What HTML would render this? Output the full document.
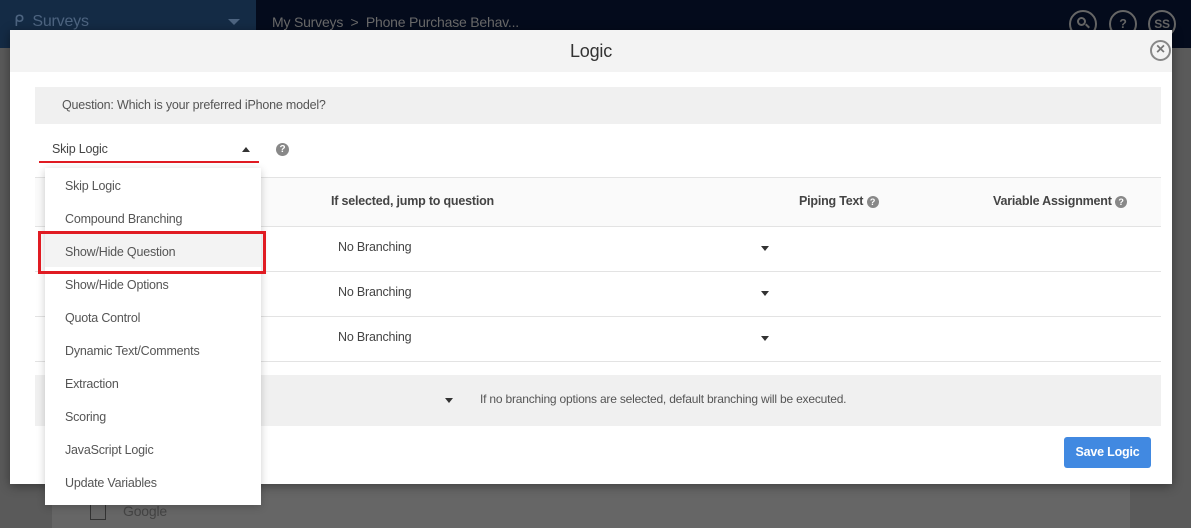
<!DOCTYPE html>
<html><head><meta charset="utf-8"><style>
*{box-sizing:border-box;margin:0;padding:0}
body{width:1191px;height:528px;overflow:hidden;position:relative;background:#5a5a5a;font-family:"Liberation Sans",sans-serif;font-size:12.5px;letter-spacing:-0.2px;color:#555}
.a{position:absolute}
</style></head><body>
<div class="a" style="left:0;top:0;width:256px;height:48px;background:#142b45"></div>
<div class="a" style="left:256px;top:0;width:935px;height:48px;background:#040b1c"></div>
<div class="a" style="left:14px;top:11px;color:#4d6480;font-size:16px">ᑭ&nbsp; Surveys</div>
<div class="a" style="left:228px;top:19px;width:0;height:0;border-left:6px solid transparent;border-right:6px solid transparent;border-top:6px solid #4d6480"></div>
<div class="a" style="left:272px;top:14px;color:#6a6a6a;font-size:14px">My Surveys &nbsp;&gt;&nbsp; Phone Purchase Behav...</div>
<div class="a" style="left:1069px;top:10px;width:28px;height:28px;border:2px solid #666;border-radius:50%"><div class="a" style="left:6px;top:5px;width:9px;height:9px;border:2px solid #666;border-radius:50%"></div><div class="a" style="left:14px;top:13px;width:5px;height:2px;background:#666;transform:rotate(45deg)"></div></div>
<div class="a" style="left:1109px;top:10px;width:28px;height:28px;border:2px solid #666;border-radius:50%;color:#666;font-weight:bold;text-align:center;line-height:24px">?</div>
<div class="a" style="left:1148px;top:10px;width:28px;height:28px;border:2px solid #666;border-radius:50%;color:#666;font-weight:bold;text-align:center;line-height:24px;font-size:12px">SS</div>
<div class="a" style="left:52px;top:484px;width:1078px;height:44px;background:#666"></div>
<div class="a" style="left:90px;top:503px;width:16px;height:17px;border:1px solid #333"></div>
<div class="a" style="left:123px;top:503px;color:#444;font-size:14px">Google</div>

<div class="a" style="left:10px;top:30px;width:1162px;height:454px;background:#fff;box-shadow:0 2px 10px rgba(0,0,0,.4)">
 <div class="a" style="left:0;top:0;width:1162px;height:42px;background:#f3f3f3;text-align:center;line-height:42px;font-size:18px;color:#333">Logic</div>
 <div class="a" style="left:1140px;top:10px;width:21px;height:21px;border:2px solid #888;border-radius:50%;color:#777;text-align:center;line-height:16px;font-size:16px;font-weight:bold">×</div>
 <div class="a" style="left:25px;top:57px;width:1126px;height:37px;background:#f0f0f0;padding-left:27px;line-height:37px;color:#555">Question: Which is your preferred iPhone model?</div>
 <div class="a" style="left:42px;top:112px;color:#444">Skip Logic</div>
 <div class="a" style="left:232px;top:117px;width:0;height:0;border-left:4px solid transparent;border-right:4px solid transparent;border-bottom:5px solid #333"></div>
 <div class="a" style="left:29px;top:131px;width:220px;height:2px;background:#e01b22"></div>
 <div class="a" style="left:266px;top:113px;width:13px;height:13px;border-radius:50%;background:#888;color:#fff;font-size:10px;font-weight:bold;text-align:center;line-height:13px">?</div>
 <div class="a" style="left:25px;top:147px;width:1126px;height:50px;background:#fafafa;border-top:1px solid #e3e3e3;border-bottom:1px solid #e3e3e3"></div>
 <div class="a" style="left:321px;top:164px;font-weight:bold;color:#444">If selected, jump to question</div>
 <div class="a" style="left:789px;top:164px;font-weight:bold;color:#444">Piping Text <span style="display:inline-block;width:12px;height:12px;border-radius:50%;background:#888;color:#fff;font-size:9px;text-align:center;line-height:12px">?</span></div>
 <div class="a" style="left:983px;top:164px;font-weight:bold;color:#444">Variable Assignment <span style="display:inline-block;width:12px;height:12px;border-radius:50%;background:#888;color:#fff;font-size:9px;text-align:center;line-height:12px">?</span></div>
 <div class="a" style="left:25px;top:241px;width:1126px;height:1px;background:#e3e3e3"></div>
 <div class="a" style="left:25px;top:286px;width:1126px;height:1px;background:#e3e3e3"></div>
 <div class="a" style="left:25px;top:331px;width:1126px;height:1px;background:#e3e3e3"></div>
 <div class="a" style="left:328px;top:210px;color:#444">No Branching</div>
 <div class="a" style="left:328px;top:255px;color:#444">No Branching</div>
 <div class="a" style="left:328px;top:300px;color:#444">No Branching</div>
 <div class="a" style="left:751px;top:216px;border-left:4px solid transparent;border-right:4px solid transparent;border-top:5px solid #333"></div>
 <div class="a" style="left:751px;top:261px;border-left:4px solid transparent;border-right:4px solid transparent;border-top:5px solid #333"></div>
 <div class="a" style="left:751px;top:306px;border-left:4px solid transparent;border-right:4px solid transparent;border-top:5px solid #333"></div>
 <div class="a" style="left:25px;top:345px;width:1126px;height:51px;background:#f0f0f0"></div>
 <div class="a" style="left:435px;top:368px;border-left:4px solid transparent;border-right:4px solid transparent;border-top:5px solid #333"></div>
 <div class="a" style="left:470px;top:362px;color:#555;font-size:12px">If no branching options are selected, default branching will be executed.</div>
 <div class="a" style="left:1054px;top:407px;width:87px;height:31px;background:#4189e1;border-radius:3px;color:#fff;font-weight:bold;text-align:center;line-height:31px">Save Logic</div>
</div>

<div class="a" style="left:45px;top:168px;width:216px;height:337px;background:#fff;box-shadow:0 2px 8px rgba(0,0,0,.2)">
 <div class="a" style="left:0;top:66px;width:216px;height:33px;background:#f3f3f3"></div>
 <div class="a" style="left:20px;top:12px;line-height:13px;color:#555">
  <div style="height:33px">Skip Logic</div>
  <div style="height:33px">Compound Branching</div>
  <div style="height:33px">Show/Hide Question</div>
  <div style="height:33px">Show/Hide Options</div>
  <div style="height:33px">Quota Control</div>
  <div style="height:33px">Dynamic Text/Comments</div>
  <div style="height:33px">Extraction</div>
  <div style="height:33px">Scoring</div>
  <div style="height:33px">JavaScript Logic</div>
  <div style="height:33px">Update Variables</div>
 </div>
</div>
<div class="a" style="left:38px;top:231px;width:228px;height:43px;border:3px solid #e01b22"></div>
</body></html>
